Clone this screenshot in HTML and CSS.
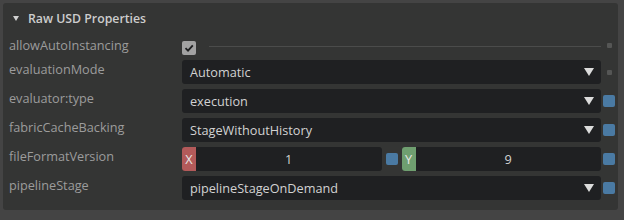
FILE: index.html
```html
<!DOCTYPE html>
<html>
<head>
<meta charset="utf-8">
<link rel="stylesheet" href="styles.css">
</head>
<body>
<div class="panel">
  <div class="header"><span class="caret"></span><span class="title">Raw USD Properties</span></div>
  <div class="rows">
    <div class="row row-check">
      <div class="label">allowAutoInstancing</div>
      <div class="value check-value">
        <span class="checkbox"><svg width="14" height="14" viewBox="0 0 14 14"><path d="M3.5 7.2 L6 9.7 L10.8 4.3" fill="none" stroke="#1e1f20" stroke-width="1.8"/></svg></span>
        <span class="hline"></span>
      </div>
      <div class="ind"><span class="dot"></span></div>
    </div>
    <div class="row">
      <div class="label">evaluationMode</div>
      <div class="value field combo"><span>Automatic</span><span class="arrow"></span></div>
      <div class="ind"><span class="dot"></span></div>
    </div>
    <div class="row">
      <div class="label">evaluator:type</div>
      <div class="value field combo"><span>execution</span><span class="arrow"></span></div>
      <div class="ind"><span class="blue"></span></div>
    </div>
    <div class="row">
      <div class="label">fabricCacheBacking</div>
      <div class="value field combo"><span>StageWithoutHistory</span><span class="arrow"></span></div>
      <div class="ind"><span class="blue"></span></div>
    </div>
    <div class="row">
      <div class="label">fileFormatVersion</div>
      <div class="value vec">
        <div class="field num"><span class="axis ax-x">X</span><span class="numval">1</span></div>
        <span class="blue"></span>
        <div class="field num"><span class="axis ax-y">Y</span><span class="numval">9</span></div>
      </div>
      <div class="ind"><span class="blue"></span></div>
    </div>
    <div class="row">
      <div class="label">pipelineStage</div>
      <div class="value field combo"><span>pipelineStageOnDemand</span><span class="arrow"></span></div>
      <div class="ind"><span class="blue"></span></div>
    </div>
  </div>
</div>
</body>
</html>
```
FILE: styles.css
```css
html, body {
  margin: 0;
  padding: 0;
  background: #444444;
}
body {
  padding: 3px 6px 10px 3px;
  width: 624px;
  height: 220px;
  box-sizing: border-box;
  font-family: "Open Sans", "Noto Sans", sans-serif;
  font-size: 12.7px;
}
.panel {
  background: #343534;
  border-radius: 3px;
  height: 207px;
  box-sizing: border-box;
  padding: 0 5px 0 6px;
}
.header {
  height: 30px;
  display: flex;
  align-items: center;
  color: #cdcdcd;
  font-weight: 600;
}
.caret {
  width: 0;
  height: 0;
  border-left: 3px solid transparent;
  border-right: 3px solid transparent;
  border-top: 5px solid #d0d0d0;
  margin-left: 4px;
  margin-right: 9px;
  margin-top: 1px;
}
.title {
  font-size: 12.3px;
}
.rows {
  margin-top: 3px;
  display: flex;
  flex-direction: column;
  gap: 5px;
}
.row {
  display: grid;
  grid-template-columns: 173px 1fr 12px;
  height: 24px;
}
.row-check {
  height: 19px;
}
.label {
  color: #9c9c9c;
  line-height: 18px;
  align-self: start;
}
.value {
  min-width: 0;
}
.ind {
  margin-left: 4px;
  display: flex;
  align-items: center;
  justify-content: center;
}
.row-check .ind {
  align-items: flex-start;
  padding-top: 7px;
}
.dot {
  width: 5px;
  height: 5px;
  background: #555655;
  border-radius: 1px;
}
.blue {
  width: 12px;
  height: 12px;
  background: #4a7aa3;
  border-radius: 2px;
  flex: none;
}
.check-value {
  display: flex;
  align-items: flex-start;
  padding-top: 5px;
}
.checkbox {
  width: 14px;
  height: 14px;
  background: #a2a2a2;
  border-radius: 2px;
  display: block;
  flex: none;
}
.checkbox svg {
  display: block;
}
.hline {
  flex: 1;
  height: 1px;
  background: #4b4c4b;
  margin-left: 13px;
  margin-top: 5px;
}
.field {
  background: #1f2022;
  border-radius: 3px;
  color: #d2d2d2;
  height: 24px;
  box-sizing: border-box;
}
.combo {
  display: flex;
  align-items: center;
  justify-content: space-between;
  padding: 0 7px 0 8px;
}
.arrow {
  width: 0;
  height: 0;
  border-left: 5px solid transparent;
  border-right: 5px solid transparent;
  border-top: 8px solid #dcdcdc;
}
.vec {
  display: flex;
  align-items: center;
  gap: 4px;
}
.num {
  flex: 1;
  display: flex;
  align-items: center;
}
.axis {
  width: 14px;
  height: 24px;
  border-radius: 3px 0 0 3px;
  display: flex;
  align-items: center;
  justify-content: center;
  color: #e6e6e6;
  flex: none;
}
.ax-x {
  background: #b35a5a;
}
.ax-y {
  background: #6f9f70;
}
.numval {
  flex: 1;
  text-align: center;
}
```
